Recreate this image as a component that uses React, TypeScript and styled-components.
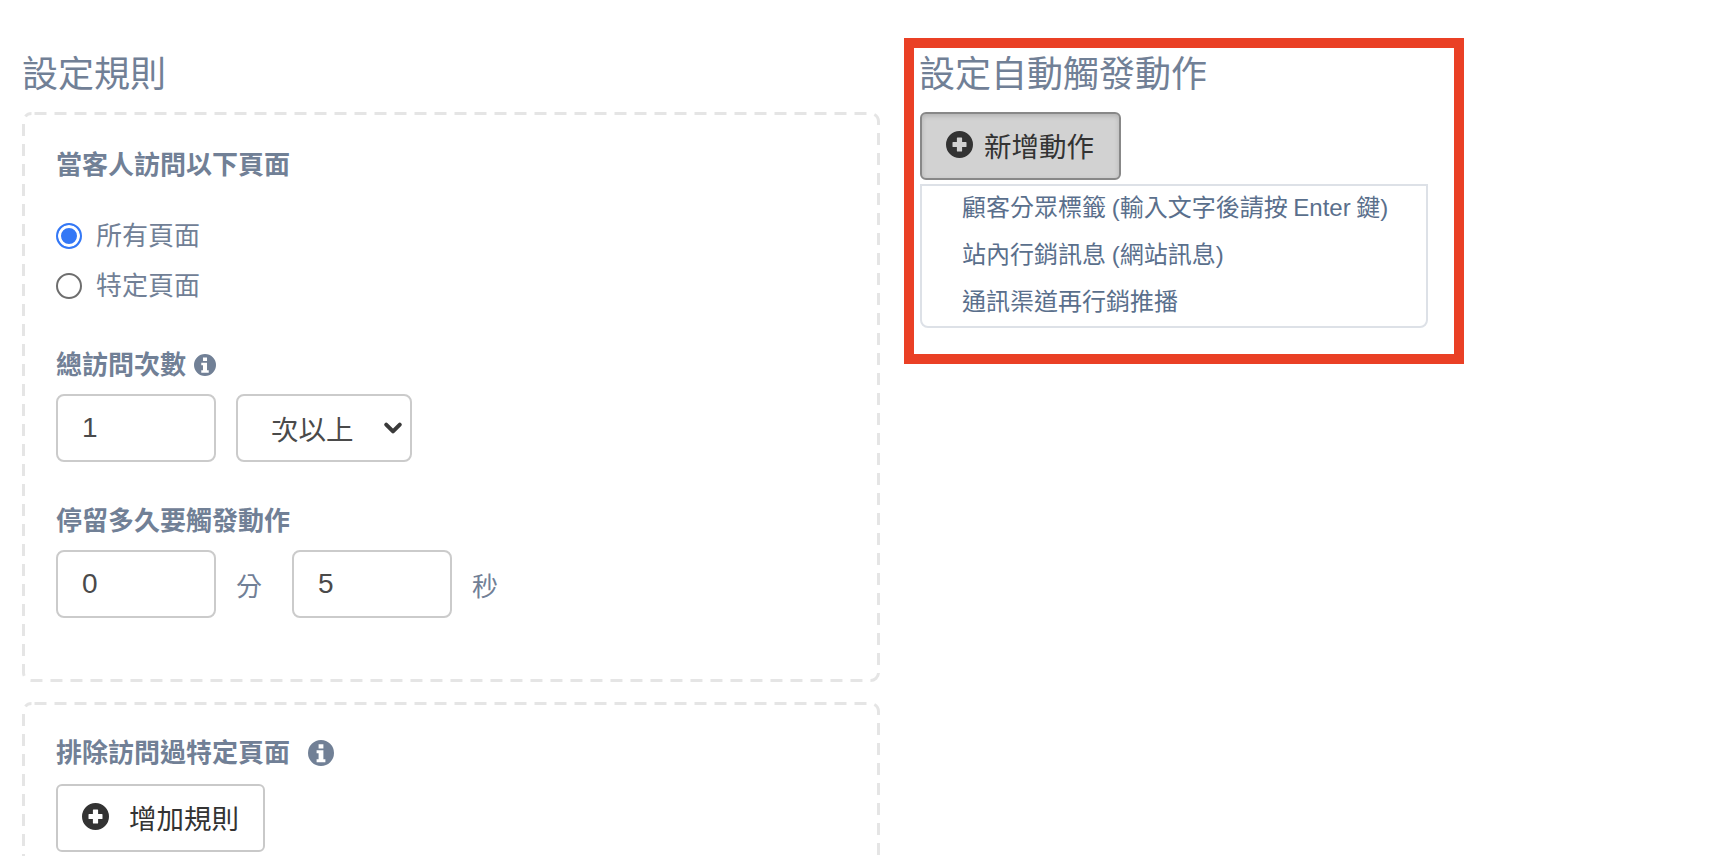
import styled, { createGlobalStyle } from "styled-components";

const GlobalStyle = createGlobalStyle`
  html, body {
    margin: 0;
    padding: 0;
    background: #fff;
    height: 100%;
    overflow: hidden;
  }
  body {
    font-family: "Liberation Sans", "Noto Sans CJK TC", sans-serif;
    color: #333;
  }
`;

const Page = styled.div`
  display: flex;
  align-items: flex-start;
  width: 1726px;
  height: 856px;
  overflow: hidden;
  padding: 38px 0 0 22px;
  box-sizing: border-box;
`;

const RulesColumn = styled.div`
  width: 858px;
  flex-shrink: 0;
  padding-top: 12px;
`;

const Heading = styled.h2`
  margin: 0;
  font-size: 36px;
  line-height: 50px;
  font-weight: 400;
  color: #718096;
`;

const PanelHeading = styled(Heading)`
  margin-left: -1px;
  line-height: 54px;
`;

const RuleCard = styled.div`
  position: relative;
  box-sizing: border-box;
  height: 570px;
  margin-top: 12px;
  padding: 35px 34px;
  border-radius: 8px;
`;

const ExcludeCard = styled(RuleCard)`
  height: 300px;
  margin-top: 20px;
  padding-top: 33px;
`;

const DashedOutline = styled.svg`
  position: absolute;
  inset: 0;
  width: 100%;
  height: 100%;
  pointer-events: none;

  rect {
    x: 1.5px;
    y: 1.5px;
    width: calc(100% - 3px);
    height: calc(100% - 3px);
    rx: 8px;
    fill: none;
    stroke: #e5e5e5;
    stroke-width: 3px;
    stroke-dasharray: 12 8;
    stroke-dashoffset: -3;
  }
`;

const Label = styled.div`
  display: flex;
  align-items: center;
  gap: 8px;
  font-size: 26px;
  line-height: 36px;
  font-weight: 700;
  color: #718096;
`;

const InfoGlyph = styled.svg<{ $size: number; $gap: number }>`
  width: ${({ $size }) => $size}px;
  height: ${({ $size }) => $size}px;
  margin-left: ${({ $gap }) => $gap}px;
  fill: #718096;
`;

const RadioGroup = styled.div`
  display: flex;
  flex-direction: column;
  gap: 14px;
  margin: 35px 0 43px;
`;

const RadioRow = styled.label`
  display: flex;
  align-items: center;
  gap: 14px;
  height: 36px;
  font-size: 26px;
  color: #718096;
`;

const RadioText = styled.span`
  padding-bottom: 5px;
`;

const RadioMark = styled.span<{ $checked?: boolean }>`
  box-sizing: border-box;
  width: 26px;
  height: 26px;
  border-radius: 50%;
  border: ${({ $checked }) => ($checked ? "2px solid #3478f6" : "2px solid #6e6e6e")};
  background: ${({ $checked }) => ($checked ? "#3478f6" : "#fff")};
  box-shadow: ${({ $checked }) => ($checked ? "inset 0 0 0 3px #fff" : "none")};
`;

const FieldRow = styled.div`
  display: flex;
  align-items: center;
  margin-top: 11px;
`;

const ValueBox = styled.div`
  box-sizing: border-box;
  display: flex;
  align-items: center;
  width: 160px;
  height: 68px;
  padding-left: 24px;
  border: 2px solid #cbcbcb;
  border-radius: 8px;
  font-size: 28px;
  color: #4a4a4a;
`;

const SelectBox = styled(ValueBox)`
  justify-content: space-between;
  width: 176px;
  margin-left: 20px;
  padding: 0 7px 0 33px;
  font-size: 27.5px;
`;

const Unit = styled.span`
  width: 76px;
  padding-left: 20px;
  box-sizing: border-box;
  font-size: 26px;
  color: #718096;
`;

const FieldSpacer = styled.div`
  height: 41px;
`;

const OutlineButton = styled.button`
  display: inline-flex;
  align-items: center;
  box-sizing: border-box;
  height: 68px;
  margin-top: 13px;
  padding: 0 24px 3px;
  gap: 20px;
  border: 2px solid #c9c9c9;
  border-radius: 6px;
  background: #fff;
  font-family: inherit;
  font-size: 27.5px;
  color: #333;
`;

const ActionsPanel = styled.section`
  box-sizing: border-box;
  width: 560px;
  height: 326px;
  margin-left: 24px;
  padding: 0 6px;
  border: 10px solid #ea4025;
`;

const PressedButton = styled(OutlineButton)`
  margin-top: 10px;
  padding: 0 25px 3px 24px;
  gap: 11px;
  border-color: #888;
  background: #d2d2d2;
  box-shadow: inset 0 2px 5px rgba(0, 0, 0, 0.15);
`;

const Menu = styled.ul`
  box-sizing: border-box;
  list-style: none;
  width: 508px;
  height: 144px;
  margin: 4px 0 0;
  padding: 0 0 0 40px;
  border: 2px solid #dde1e7;
  border-radius: 0 0 8px 8px;
`;

const MenuItem = styled.li`
  height: 47px;
  font-size: 24px;
  line-height: 44px;
  word-spacing: -1px;
  color: #5a6f8c;
  white-space: nowrap;
`;

const PlusGlyph = styled.svg`
  flex-shrink: 0;
  width: 27px;
  height: 27px;
  fill: #333;
`;

const InfoIcon = ({ size, gap }: { size: number; gap: number }) => (
  <InfoGlyph $size={size} $gap={gap} viewBox="0 0 26 26">
    <path
      fillRule="evenodd"
      d="M13 0a13 13 0 1 1 0 26a13 13 0 0 1 0-26zM10.6 4.2v4.2h4.8V4.2zM8.6 10.2v3h2v6h-2v3h8.8v-3h-2v-9z"
    />
  </InfoGlyph>
);

const PlusIcon = () => (
  <PlusGlyph viewBox="0 0 27 27">
    <path
      fillRule="evenodd"
      d="M13.5 0a13.5 13.5 0 1 1 0 27a13.5 13.5 0 0 1 0-27zM11.5 6.5a.6.6 0 0 0-.6.6v3.8H7.1a.6.6 0 0 0-.6.6v4c0 .3.3.6.6.6h3.8v3.8c0 .3.3.6.6.6h4c.3 0 .6-.3.6-.6v-3.8h3.8c.3 0 .6-.3.6-.6v-4a.6.6 0 0 0-.6-.6h-3.8V7.1a.6.6 0 0 0-.6-.6z"
    />
  </PlusGlyph>
);

const Chevron = () => (
  <svg width="20" height="14" viewBox="0 0 20 14">
    <path
      d="M3.2 3.6L10 10.4L16.8 3.6"
      fill="none"
      stroke="#3a3a3a"
      strokeWidth="4"
      strokeLinecap="round"
      strokeLinejoin="round"
    />
  </svg>
);

const CardOutline = () => (
  <DashedOutline>
    <rect />
  </DashedOutline>
);

export default function App() {
  return (
    <Page>
      <GlobalStyle />
      <RulesColumn>
        <Heading>設定規則</Heading>
        <RuleCard>
          <CardOutline />
          <Label>當客人訪問以下頁面</Label>
          <RadioGroup>
            <RadioRow>
              <RadioMark $checked />
              <RadioText>所有頁面</RadioText>
            </RadioRow>
            <RadioRow>
              <RadioMark />
              <RadioText>特定頁面</RadioText>
            </RadioRow>
          </RadioGroup>
          <Label>
            總訪問次數
            <InfoIcon size={22} gap={0} />
          </Label>
          <FieldRow>
            <ValueBox>1</ValueBox>
            <SelectBox>
              次以上
              <Chevron />
            </SelectBox>
          </FieldRow>
          <FieldSpacer />
          <Label>停留多久要觸發動作</Label>
          <FieldRow>
            <ValueBox>0</ValueBox>
            <Unit>分</Unit>
            <ValueBox>5</ValueBox>
            <Unit>秒</Unit>
          </FieldRow>
        </RuleCard>
        <ExcludeCard>
          <CardOutline />
          <Label>
            排除訪問過特定頁面
            <InfoIcon size={26} gap={10} />
          </Label>
          <OutlineButton>
            <PlusIcon />
            增加規則
          </OutlineButton>
        </ExcludeCard>
      </RulesColumn>
      <ActionsPanel>
        <PanelHeading>設定自動觸發動作</PanelHeading>
        <PressedButton>
          <PlusIcon />
          新增動作
        </PressedButton>
        <Menu>
          <MenuItem>顧客分眾標籤 (輸入文字後請按 Enter 鍵)</MenuItem>
          <MenuItem>站內行銷訊息 (網站訊息)</MenuItem>
          <MenuItem>通訊渠道再行銷推播</MenuItem>
        </Menu>
      </ActionsPanel>
    </Page>
  );
}
